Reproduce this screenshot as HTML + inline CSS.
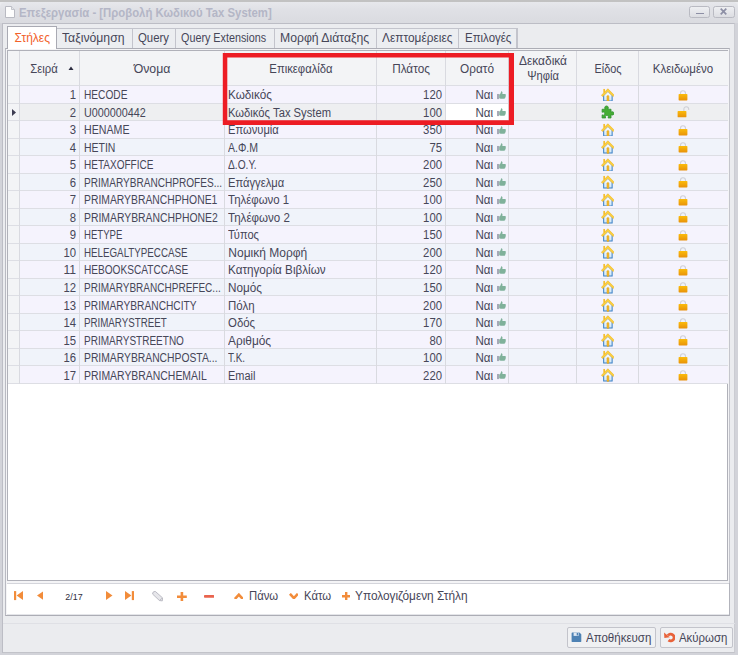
<!DOCTYPE html>
<html lang="el"><head><meta charset="utf-8"><title>Επεξεργασία - [Προβολή Κωδικού Tax System]</title>
<style>
html,body{margin:0;padding:0}
body{width:738px;height:655px;overflow:hidden;position:relative;background:#ebecef;font-family:"Liberation Sans", sans-serif;font-size:11.6px;color:#464658}
.t{position:absolute;display:block;white-space:nowrap;line-height:1}
.t.l{transform-origin:0 50%}
.t.c{transform-origin:50% 50%}
.t.r{transform-origin:100% 50%}
.ic{position:absolute;display:block;line-height:0}
.ic svg{display:block}
</style></head>
<body>
<div class="" style="position:absolute;left:0.00px;top:0.00px;width:738.00px;height:2.00px;background:#c2c2c2"></div>
<div class="" style="position:absolute;left:0.00px;top:2.00px;width:738.00px;height:21.00px;background:linear-gradient(#e7e8ec,#dfe0e5 40%,#dadbe0);border-radius:5px 5px 0 0"></div>
<div class="" style="position:absolute;left:0.00px;top:23.00px;width:738.00px;height:632.00px;background:#d2d3d9"></div>
<div class="" style="position:absolute;left:2.00px;top:23.00px;width:733.00px;height:630.00px;border:1px solid #bcbdc5;border-right-color:#cbccd2;border-bottom-color:#c2c3c9;box-sizing:border-box;background:#ebecef"></div>
<span class="ic" style="left:5.2px;top:5.8px;width:10px;height:12px"><svg viewBox="0 0 10 12" width="10" height="12"><path d="M.5.500h6l3 3v8h-9z" fill="#fdfdfd" stroke="#b9bac2" stroke-width="1"/><path d="M6.500.500v3h3" fill="#e4e5ea" stroke="#b9bac2" stroke-width=".8"/></svg></span>
<span class="t l" id="t0" style="left:18.60px;top:7.00px;font-size:12px;color:#b4b6c6;font-weight:bold;transform:scaleX(0.9454);">Επεξεργασία - [Προβολή Κωδικού Tax System]</span>
<div class="" style="position:absolute;left:689.00px;top:6.00px;width:21.00px;height:12.00px;border:1px solid #b9bac2;box-sizing:border-box;border-radius:2.5px;background:linear-gradient(#eeeff2,#dcdde2)"></div>
<div class="" style="position:absolute;left:696.00px;top:13.00px;width:8.00px;height:1.00px;background:#8d8fa5"></div>
<div class="" style="position:absolute;left:713.00px;top:6.00px;width:22.00px;height:12.00px;border:1px solid #b9bac2;box-sizing:border-box;border-radius:2.5px;background:linear-gradient(#eeeff2,#dcdde2)"></div>
<span class="ic" style="left:720.2px;top:8.4px;width:7px;height:7px"><svg viewBox="0 0 7 7" width="7" height="7"><path d="M.7.700l5.600 5.600M6.300.700L.7 6.300" stroke="#8d8fa5" stroke-width="1.700"/></svg></span>
<div class="" style="position:absolute;left:5.00px;top:48.00px;width:725.00px;height:568.00px;border:1px solid #acadb5;border-left-color:#b9bac2;border-right-color:#c4c5cc;box-sizing:border-box;background:#f4f4f6"></div>
<div class="" style="position:absolute;left:729.00px;top:583.00px;width:1.00px;height:33.00px;background:#b2b3bb"></div>
<div class="" style="position:absolute;left:7.00px;top:26.00px;width:50.00px;height:23.00px;background:#a9aab3"></div>
<div class="" style="position:absolute;left:8.00px;top:27.00px;width:48.00px;height:22.00px;background:#fff"></div>
<span class="t l" id="t1" style="left:14.60px;top:32.00px;font-size:12px;color:#f2612a;">Στήλες</span>
<div class="" style="position:absolute;left:57.00px;top:28.00px;width:76.00px;height:20.00px;background:#c3c4cc"></div>
<div class="" style="position:absolute;left:57.00px;top:29.00px;width:75.00px;height:19.00px;background:#eceef1"></div>
<span class="t l" id="t2" style="left:62.20px;top:32.00px;font-size:12px;transform:scaleX(1.0188);">Ταξινόμηση</span>
<div class="" style="position:absolute;left:133.00px;top:28.00px;width:43.00px;height:20.00px;background:#c3c4cc"></div>
<div class="" style="position:absolute;left:133.00px;top:29.00px;width:42.00px;height:19.00px;background:#eceef1"></div>
<span class="t l" id="t3" style="left:137.60px;top:32.00px;font-size:12px;transform:scaleX(0.9484);">Query</span>
<div class="" style="position:absolute;left:176.00px;top:28.00px;width:99.00px;height:20.00px;background:#c3c4cc"></div>
<div class="" style="position:absolute;left:176.00px;top:29.00px;width:98.00px;height:19.00px;background:#eceef1"></div>
<span class="t l" id="t4" style="left:181.20px;top:32.00px;font-size:12px;transform:scaleX(0.8984);">Query Extensions</span>
<div class="" style="position:absolute;left:275.00px;top:28.00px;width:102.00px;height:20.00px;background:#c3c4cc"></div>
<div class="" style="position:absolute;left:275.00px;top:29.00px;width:101.00px;height:19.00px;background:#eceef1"></div>
<span class="t l" id="t5" style="left:280.20px;top:32.00px;font-size:12px;transform:scaleX(1.0172);">Μορφή Διάταξης</span>
<div class="" style="position:absolute;left:377.00px;top:28.00px;width:82.00px;height:20.00px;background:#c3c4cc"></div>
<div class="" style="position:absolute;left:377.00px;top:29.00px;width:81.00px;height:19.00px;background:#eceef1"></div>
<span class="t l" id="t6" style="left:381.90px;top:32.00px;font-size:12px;transform:scaleX(0.9910);">Λεπτομέρειες</span>
<div class="" style="position:absolute;left:459.00px;top:28.00px;width:59.00px;height:20.00px;background:#c3c4cc"></div>
<div class="" style="position:absolute;left:459.00px;top:29.00px;width:57.00px;height:19.00px;background:#eceef1"></div>
<span class="t l" id="t7" style="left:465.30px;top:32.00px;font-size:12px;transform:scaleX(0.9552);">Επιλογές</span>
<div class="" style="position:absolute;left:7.00px;top:50.00px;width:721.00px;height:531.00px;border:1px solid #b0b1b9;box-sizing:border-box;background:#fff"></div>
<div class="" style="position:absolute;left:8.00px;top:51.00px;width:720.00px;height:35.00px;background:#f3f4f6"></div>
<div class="" style="position:absolute;left:19.00px;top:86.00px;width:709.00px;height:17.00px;background:#f5f3fd"></div>
<div class="" style="position:absolute;left:8.00px;top:86.00px;width:11.00px;height:17.00px;background:#f3f4f6"></div>
<div class="" style="position:absolute;left:19.00px;top:103.00px;width:709.00px;height:18.00px;background:#eeeff1"></div>
<div class="" style="position:absolute;left:8.00px;top:103.00px;width:11.00px;height:18.00px;background:#f3f4f6"></div>
<div class="" style="position:absolute;left:446.00px;top:104.00px;width:62.00px;height:16.00px;background:#fff"></div>
<div class="" style="position:absolute;left:19.00px;top:121.00px;width:709.00px;height:17.00px;background:#f5f3fd"></div>
<div class="" style="position:absolute;left:8.00px;top:121.00px;width:11.00px;height:17.00px;background:#f3f4f6"></div>
<div class="" style="position:absolute;left:19.00px;top:138.00px;width:709.00px;height:18.00px;background:#f0f3fa"></div>
<div class="" style="position:absolute;left:8.00px;top:138.00px;width:11.00px;height:18.00px;background:#f3f4f6"></div>
<div class="" style="position:absolute;left:19.00px;top:156.00px;width:709.00px;height:17.00px;background:#f5f3fd"></div>
<div class="" style="position:absolute;left:8.00px;top:156.00px;width:11.00px;height:17.00px;background:#f3f4f6"></div>
<div class="" style="position:absolute;left:19.00px;top:173.00px;width:709.00px;height:18.00px;background:#f0f3fa"></div>
<div class="" style="position:absolute;left:8.00px;top:173.00px;width:11.00px;height:18.00px;background:#f3f4f6"></div>
<div class="" style="position:absolute;left:19.00px;top:191.00px;width:709.00px;height:17.00px;background:#f5f3fd"></div>
<div class="" style="position:absolute;left:8.00px;top:191.00px;width:11.00px;height:17.00px;background:#f3f4f6"></div>
<div class="" style="position:absolute;left:19.00px;top:208.00px;width:709.00px;height:18.00px;background:#f0f3fa"></div>
<div class="" style="position:absolute;left:8.00px;top:208.00px;width:11.00px;height:18.00px;background:#f3f4f6"></div>
<div class="" style="position:absolute;left:19.00px;top:226.00px;width:709.00px;height:17.00px;background:#f5f3fd"></div>
<div class="" style="position:absolute;left:8.00px;top:226.00px;width:11.00px;height:17.00px;background:#f3f4f6"></div>
<div class="" style="position:absolute;left:19.00px;top:243.00px;width:709.00px;height:18.00px;background:#f0f3fa"></div>
<div class="" style="position:absolute;left:8.00px;top:243.00px;width:11.00px;height:18.00px;background:#f3f4f6"></div>
<div class="" style="position:absolute;left:19.00px;top:261.00px;width:709.00px;height:17.00px;background:#f5f3fd"></div>
<div class="" style="position:absolute;left:8.00px;top:261.00px;width:11.00px;height:17.00px;background:#f3f4f6"></div>
<div class="" style="position:absolute;left:19.00px;top:278.00px;width:709.00px;height:18.00px;background:#f0f3fa"></div>
<div class="" style="position:absolute;left:8.00px;top:278.00px;width:11.00px;height:18.00px;background:#f3f4f6"></div>
<div class="" style="position:absolute;left:19.00px;top:296.00px;width:709.00px;height:17.00px;background:#f5f3fd"></div>
<div class="" style="position:absolute;left:8.00px;top:296.00px;width:11.00px;height:17.00px;background:#f3f4f6"></div>
<div class="" style="position:absolute;left:19.00px;top:313.00px;width:709.00px;height:18.00px;background:#f0f3fa"></div>
<div class="" style="position:absolute;left:8.00px;top:313.00px;width:11.00px;height:18.00px;background:#f3f4f6"></div>
<div class="" style="position:absolute;left:19.00px;top:331.00px;width:709.00px;height:17.00px;background:#f5f3fd"></div>
<div class="" style="position:absolute;left:8.00px;top:331.00px;width:11.00px;height:17.00px;background:#f3f4f6"></div>
<div class="" style="position:absolute;left:19.00px;top:348.00px;width:709.00px;height:18.00px;background:#f0f3fa"></div>
<div class="" style="position:absolute;left:8.00px;top:348.00px;width:11.00px;height:18.00px;background:#f3f4f6"></div>
<div class="" style="position:absolute;left:19.00px;top:366.00px;width:709.00px;height:17.00px;background:#f5f3fd"></div>
<div class="" style="position:absolute;left:8.00px;top:366.00px;width:11.00px;height:17.00px;background:#f3f4f6"></div>
<div class="" style="position:absolute;left:8.00px;top:85.00px;width:720.00px;height:1.00px;background:#dddee4"></div>
<div class="" style="position:absolute;left:8.00px;top:103.00px;width:720.00px;height:1.00px;background:#dddee4"></div>
<div class="" style="position:absolute;left:8.00px;top:120.00px;width:720.00px;height:1.00px;background:#dddee4"></div>
<div class="" style="position:absolute;left:8.00px;top:138.00px;width:720.00px;height:1.00px;background:#dddee4"></div>
<div class="" style="position:absolute;left:8.00px;top:155.00px;width:720.00px;height:1.00px;background:#dddee4"></div>
<div class="" style="position:absolute;left:8.00px;top:173.00px;width:720.00px;height:1.00px;background:#dddee4"></div>
<div class="" style="position:absolute;left:8.00px;top:190.00px;width:720.00px;height:1.00px;background:#dddee4"></div>
<div class="" style="position:absolute;left:8.00px;top:208.00px;width:720.00px;height:1.00px;background:#dddee4"></div>
<div class="" style="position:absolute;left:8.00px;top:225.00px;width:720.00px;height:1.00px;background:#dddee4"></div>
<div class="" style="position:absolute;left:8.00px;top:243.00px;width:720.00px;height:1.00px;background:#dddee4"></div>
<div class="" style="position:absolute;left:8.00px;top:260.00px;width:720.00px;height:1.00px;background:#dddee4"></div>
<div class="" style="position:absolute;left:8.00px;top:278.00px;width:720.00px;height:1.00px;background:#dddee4"></div>
<div class="" style="position:absolute;left:8.00px;top:295.00px;width:720.00px;height:1.00px;background:#dddee4"></div>
<div class="" style="position:absolute;left:8.00px;top:313.00px;width:720.00px;height:1.00px;background:#dddee4"></div>
<div class="" style="position:absolute;left:8.00px;top:330.00px;width:720.00px;height:1.00px;background:#dddee4"></div>
<div class="" style="position:absolute;left:8.00px;top:348.00px;width:720.00px;height:1.00px;background:#dddee4"></div>
<div class="" style="position:absolute;left:8.00px;top:365.00px;width:720.00px;height:1.00px;background:#dddee4"></div>
<div class="" style="position:absolute;left:8.00px;top:383.00px;width:720.00px;height:1.00px;background:#dddee4"></div>
<div class="" style="position:absolute;left:19.00px;top:51.00px;width:1.00px;height:333.00px;background:#d9dae0"></div>
<div class="" style="position:absolute;left:79.00px;top:51.00px;width:1.00px;height:333.00px;background:#d9dae0"></div>
<div class="" style="position:absolute;left:224.00px;top:51.00px;width:1.00px;height:333.00px;background:#d9dae0"></div>
<div class="" style="position:absolute;left:376.00px;top:51.00px;width:1.00px;height:333.00px;background:#d9dae0"></div>
<div class="" style="position:absolute;left:445.00px;top:51.00px;width:1.00px;height:333.00px;background:#d9dae0"></div>
<div class="" style="position:absolute;left:508.00px;top:51.00px;width:1.00px;height:333.00px;background:#d9dae0"></div>
<div class="" style="position:absolute;left:576.00px;top:51.00px;width:1.00px;height:333.00px;background:#d9dae0"></div>
<div class="" style="position:absolute;left:638.00px;top:51.00px;width:1.00px;height:333.00px;background:#d9dae0"></div>
<span class="t c" id="t8" style="left:44.00px;top:63.00px;font-size:12px;transform:translateX(-50%) scaleX(0.9451);">Σειρά</span>
<span class="ic" style="left:68.3px;top:66.4px;width:6px;height:4px"><svg viewBox="0 0 6 4" width="6" height="4"><path d="M.5 4L3 .4 5.500 4z" fill="#2c2c40"/></svg></span>
<span class="t c" id="t9" style="left:151.95px;top:63.00px;font-size:12px;transform:translateX(-50%) scaleX(1.0243);">Όνομα</span>
<span class="t c" id="t10" style="left:300.95px;top:63.00px;font-size:12px;transform:translateX(-50%) scaleX(0.9404);">Επικεφαλίδα</span>
<span class="t c" id="t11" style="left:410.95px;top:63.00px;font-size:12px;transform:translateX(-50%) scaleX(0.9804);">Πλάτος</span>
<span class="t c" id="t12" style="left:476.80px;top:63.00px;font-size:12px;transform:translateX(-50%) scaleX(0.9822);">Ορατό</span>
<span class="t c" id="t13" style="left:542.65px;top:55.00px;font-size:12px;transform:translateX(-50%) scaleX(0.9939);">Δεκαδικά</span>
<span class="t c" id="t14" style="left:542.65px;top:70.00px;font-size:12px;transform:translateX(-50%) scaleX(0.9298);">Ψηφία</span>
<span class="t c" id="t15" style="left:607.80px;top:63.00px;font-size:12px;transform:translateX(-50%) scaleX(0.9057);">Είδος</span>
<span class="t c" id="t16" style="left:683.35px;top:63.00px;font-size:12px;transform:translateX(-50%) scaleX(0.9601);">Κλειδωμένο</span>
<span class="t r" id="t17" style="left:75.80px;top:89.00px;font-size:12px;transform:translateX(-100%) scaleX(0.9421);">1</span>
<span class="t l" id="t18" style="left:83.60px;top:89.00px;font-size:12px;transform:scaleX(0.8453);">HECODE</span>
<span class="t l" id="t19" style="left:228.30px;top:89.00px;font-size:12px;transform:scaleX(0.9757);">Κωδικός</span>
<span class="t r" id="t20" style="left:441.80px;top:89.00px;font-size:12px;transform:translateX(-100%) scaleX(0.9435);">120</span>
<span class="t r" id="t21" style="left:493.10px;top:89.00px;font-size:12px;transform:translateX(-100%) scaleX(0.9627);">Ναι</span>
<span class="ic" style="left:496.90px;top:90.66px;width:9.3px;height:9.0px"><svg viewBox="0 0 10 10" width="9.3" height="9.0"><rect x="0" y="3.300" width="1.900" height="5.700" fill="#9a9cab"/><path d="M2.300 3.900C3.800 3.200 4.200 1.800 4.400.300c1.400 0 1.900 1.200 1.400 3h2.800c.9 0 1.200.8.900 1.400.3.500.2 1-.1 1.400.1.500-.1.900-.4 1.200C9.100 8 8.600 8.600 7.800 8.600H4L2.300 8z" fill="#7fb19a"/></svg></span>
<span class="ic" style="left:600.60px;top:87.61px;width:13.8px;height:13.8px"><svg viewBox="0 0 16 16" width="13.8" height="13.8"><defs><linearGradient id="hg" x1="0" y1="0" x2="0" y2="1"><stop offset="0" stop-color="#ffffff"/><stop offset="1" stop-color="#cfe6f7"/></linearGradient></defs><rect x="2.700" y="1.100" width="1.900" height="4.500" fill="#f4bd2c"/><path d="M3.100 8.400V15.100h9.800V8.400L8 3.700z" fill="url(#hg)" stroke="#3a80c6" stroke-width="1.200"/><path d="M3.100 8.800L8 4l4.900 4.800V7L8 2.600 3.100 7z" fill="#fff"/><rect x="6.900" y="8.800" width="2.300" height="6.900" rx=".9" fill="#f3b928" stroke="#e29a10" stroke-width=".5"/><path d="M.5 8.400L8 .9l7.500 7.500-1.500 1.500L8 3.900 2 9.900z" fill="#fbd13e" stroke="#eeb11a" stroke-width=".7" stroke-linejoin="round"/></svg></span>
<span class="ic" style="left:677.90px;top:89.81px;width:10px;height:11px"><svg viewBox="0 0 10 11" width="10" height="11"><defs><linearGradient id="lg" x1="0" y1="0" x2="0" y2="1"><stop offset="0" stop-color="#fbbb0a"/><stop offset="1" stop-color="#e8920a"/></linearGradient></defs><path d="M2.500 4.600V3.300a2.500 2.500 0 0 1 5 0V4.600" fill="none" stroke="#cfd0d6" stroke-width="1.100"/><rect x=".6" y="4.100" width="8.800" height="6.400" rx=".7" fill="url(#lg)"/></svg></span>
<span class="t r" id="t22" style="left:75.80px;top:107.00px;font-size:12px;transform:translateX(-100%) scaleX(0.9421);">2</span>
<span class="t l" id="t23" style="left:83.60px;top:107.00px;font-size:12px;transform:scaleX(0.8991);">U000000442</span>
<span class="t l" id="t24" style="left:228.30px;top:107.00px;font-size:12px;transform:scaleX(0.9344);">Κωδικός Tax System</span>
<span class="t r" id="t25" style="left:441.80px;top:107.00px;font-size:12px;transform:translateX(-100%) scaleX(0.9435);">100</span>
<span class="t r" id="t26" style="left:493.10px;top:107.00px;font-size:12px;transform:translateX(-100%) scaleX(0.9627);">Ναι</span>
<span class="ic" style="left:496.90px;top:108.17px;width:9.3px;height:9.0px"><svg viewBox="0 0 10 10" width="9.3" height="9.0"><rect x="0" y="3.300" width="1.900" height="5.700" fill="#9a9cab"/><path d="M2.300 3.900C3.800 3.200 4.200 1.800 4.400.300c1.400 0 1.900 1.200 1.400 3h2.800c.9 0 1.200.8.900 1.400.3.500.2 1-.1 1.400.1.500-.1.900-.4 1.200C9.100 8 8.600 8.600 7.800 8.600H4L2.300 8z" fill="#7fb19a"/></svg></span>
<span class="ic" style="left:600.50px;top:105.32px;width:13.6px;height:13.6px"><svg viewBox="0 0 16 16" width="13.6" height="13.6"><path d="M1.300 5h3.500c-1-1.900-.2-3.900 1.700-3.900s2.700 2 1.700 3.900h3.600v3.400c1.700-1 3.500-.2 3.500 1.500s-1.800 2.500-3.500 1.500v3.900H8.300c.9-1.700.2-3.100-1.400-3.100s-2.300 1.400-1.400 3.100H1.300v-3.700c1.600.9 3.100.2 3.100-1.400S2.900 7.700 1.300 8.600z" fill="#46ad35" stroke="#2f9130" stroke-width=".9" stroke-linejoin="round"/></svg></span>
<span class="ic" style="left:676.60px;top:106.22px;width:13px;height:12px"><svg viewBox="0 0 13 12" width="13" height="12"><defs><linearGradient id="lg2" x1="0" y1="0" x2="0" y2="1"><stop offset="0" stop-color="#fbbb0a"/><stop offset="1" stop-color="#e8920a"/></linearGradient></defs><path d="M6.900 5.200V3.100a2.400 2.400 0 0 1 4.800 0V3.900" fill="none" stroke="#cfd0d6" stroke-width="1.100"/><rect x=".6" y="4.950" width="8.800" height="6.400" rx=".7" fill="url(#lg2)"/></svg></span>
<span class="t r" id="t27" style="left:75.80px;top:124.00px;font-size:12px;transform:translateX(-100%) scaleX(0.9421);">3</span>
<span class="t l" id="t28" style="left:83.60px;top:124.00px;font-size:12px;transform:scaleX(0.8862);">HENAME</span>
<span class="t l" id="t29" style="left:228.30px;top:124.00px;font-size:12px;transform:scaleX(0.9310);">Επωνυμία</span>
<span class="t r" id="t30" style="left:441.80px;top:124.00px;font-size:12px;transform:translateX(-100%) scaleX(0.9435);">350</span>
<span class="t r" id="t31" style="left:493.10px;top:124.00px;font-size:12px;transform:translateX(-100%) scaleX(0.9627);">Ναι</span>
<span class="ic" style="left:496.90px;top:125.69px;width:9.3px;height:9.0px"><svg viewBox="0 0 10 10" width="9.3" height="9.0"><rect x="0" y="3.300" width="1.900" height="5.700" fill="#9a9cab"/><path d="M2.300 3.900C3.800 3.200 4.200 1.800 4.400.300c1.400 0 1.900 1.200 1.400 3h2.800c.9 0 1.200.8.900 1.400.3.500.2 1-.1 1.400.1.500-.1.900-.4 1.200C9.100 8 8.600 8.600 7.800 8.600H4L2.300 8z" fill="#7fb19a"/></svg></span>
<span class="ic" style="left:600.60px;top:122.64px;width:13.8px;height:13.8px"><svg viewBox="0 0 16 16" width="13.8" height="13.8"><defs><linearGradient id="hg" x1="0" y1="0" x2="0" y2="1"><stop offset="0" stop-color="#ffffff"/><stop offset="1" stop-color="#cfe6f7"/></linearGradient></defs><rect x="2.700" y="1.100" width="1.900" height="4.500" fill="#f4bd2c"/><path d="M3.100 8.400V15.100h9.800V8.400L8 3.700z" fill="url(#hg)" stroke="#3a80c6" stroke-width="1.200"/><path d="M3.100 8.800L8 4l4.900 4.800V7L8 2.600 3.100 7z" fill="#fff"/><rect x="6.900" y="8.800" width="2.300" height="6.900" rx=".9" fill="#f3b928" stroke="#e29a10" stroke-width=".5"/><path d="M.5 8.400L8 .9l7.500 7.500-1.500 1.500L8 3.900 2 9.900z" fill="#fbd13e" stroke="#eeb11a" stroke-width=".7" stroke-linejoin="round"/></svg></span>
<span class="ic" style="left:677.90px;top:124.84px;width:10px;height:11px"><svg viewBox="0 0 10 11" width="10" height="11"><defs><linearGradient id="lg" x1="0" y1="0" x2="0" y2="1"><stop offset="0" stop-color="#fbbb0a"/><stop offset="1" stop-color="#e8920a"/></linearGradient></defs><path d="M2.500 4.600V3.300a2.500 2.500 0 0 1 5 0V4.600" fill="none" stroke="#cfd0d6" stroke-width="1.100"/><rect x=".6" y="4.100" width="8.800" height="6.400" rx=".7" fill="url(#lg)"/></svg></span>
<span class="t r" id="t32" style="left:75.80px;top:142.00px;font-size:12px;transform:translateX(-100%) scaleX(0.9421);">4</span>
<span class="t l" id="t33" style="left:83.60px;top:142.00px;font-size:12px;transform:scaleX(0.8722);">HETIN</span>
<span class="t l" id="t34" style="left:228.30px;top:142.00px;font-size:12px;transform:scaleX(0.8759);">Α.Φ.Μ</span>
<span class="t r" id="t35" style="left:441.80px;top:142.00px;font-size:12px;transform:translateX(-100%) scaleX(0.9432);">75</span>
<span class="t r" id="t36" style="left:493.10px;top:142.00px;font-size:12px;transform:translateX(-100%) scaleX(0.9627);">Ναι</span>
<span class="ic" style="left:496.90px;top:143.20px;width:9.3px;height:9.0px"><svg viewBox="0 0 10 10" width="9.3" height="9.0"><rect x="0" y="3.300" width="1.900" height="5.700" fill="#9a9cab"/><path d="M2.300 3.900C3.800 3.200 4.200 1.800 4.400.300c1.400 0 1.900 1.200 1.400 3h2.800c.9 0 1.200.8.900 1.400.3.500.2 1-.1 1.400.1.500-.1.900-.4 1.200C9.100 8 8.600 8.600 7.800 8.600H4L2.300 8z" fill="#7fb19a"/></svg></span>
<span class="ic" style="left:600.60px;top:140.15px;width:13.8px;height:13.8px"><svg viewBox="0 0 16 16" width="13.8" height="13.8"><defs><linearGradient id="hg" x1="0" y1="0" x2="0" y2="1"><stop offset="0" stop-color="#ffffff"/><stop offset="1" stop-color="#cfe6f7"/></linearGradient></defs><rect x="2.700" y="1.100" width="1.900" height="4.500" fill="#f4bd2c"/><path d="M3.100 8.400V15.100h9.800V8.400L8 3.700z" fill="url(#hg)" stroke="#3a80c6" stroke-width="1.200"/><path d="M3.100 8.800L8 4l4.900 4.800V7L8 2.600 3.100 7z" fill="#fff"/><rect x="6.900" y="8.800" width="2.300" height="6.900" rx=".9" fill="#f3b928" stroke="#e29a10" stroke-width=".5"/><path d="M.5 8.400L8 .9l7.500 7.500-1.500 1.500L8 3.900 2 9.900z" fill="#fbd13e" stroke="#eeb11a" stroke-width=".7" stroke-linejoin="round"/></svg></span>
<span class="ic" style="left:677.90px;top:142.35px;width:10px;height:11px"><svg viewBox="0 0 10 11" width="10" height="11"><defs><linearGradient id="lg" x1="0" y1="0" x2="0" y2="1"><stop offset="0" stop-color="#fbbb0a"/><stop offset="1" stop-color="#e8920a"/></linearGradient></defs><path d="M2.500 4.600V3.300a2.500 2.500 0 0 1 5 0V4.600" fill="none" stroke="#cfd0d6" stroke-width="1.100"/><rect x=".6" y="4.100" width="8.800" height="6.400" rx=".7" fill="url(#lg)"/></svg></span>
<span class="t r" id="t37" style="left:75.80px;top:159.00px;font-size:12px;transform:translateX(-100%) scaleX(0.9421);">5</span>
<span class="t l" id="t38" style="left:83.60px;top:159.00px;font-size:12px;transform:scaleX(0.8349);">HETAXOFFICE</span>
<span class="t l" id="t39" style="left:228.30px;top:159.00px;font-size:12px;transform:scaleX(0.8484);">Δ.Ο.Υ.</span>
<span class="t r" id="t40" style="left:441.80px;top:159.00px;font-size:12px;transform:translateX(-100%) scaleX(0.9435);">200</span>
<span class="t r" id="t41" style="left:493.10px;top:159.00px;font-size:12px;transform:translateX(-100%) scaleX(0.9627);">Ναι</span>
<span class="ic" style="left:496.90px;top:160.72px;width:9.3px;height:9.0px"><svg viewBox="0 0 10 10" width="9.3" height="9.0"><rect x="0" y="3.300" width="1.900" height="5.700" fill="#9a9cab"/><path d="M2.300 3.900C3.800 3.200 4.200 1.800 4.400.300c1.400 0 1.900 1.200 1.400 3h2.800c.9 0 1.200.8.900 1.400.3.500.2 1-.1 1.400.1.500-.1.900-.4 1.200C9.100 8 8.600 8.600 7.800 8.600H4L2.300 8z" fill="#7fb19a"/></svg></span>
<span class="ic" style="left:600.60px;top:157.67px;width:13.8px;height:13.8px"><svg viewBox="0 0 16 16" width="13.8" height="13.8"><defs><linearGradient id="hg" x1="0" y1="0" x2="0" y2="1"><stop offset="0" stop-color="#ffffff"/><stop offset="1" stop-color="#cfe6f7"/></linearGradient></defs><rect x="2.700" y="1.100" width="1.900" height="4.500" fill="#f4bd2c"/><path d="M3.100 8.400V15.100h9.800V8.400L8 3.700z" fill="url(#hg)" stroke="#3a80c6" stroke-width="1.200"/><path d="M3.100 8.800L8 4l4.900 4.800V7L8 2.600 3.100 7z" fill="#fff"/><rect x="6.900" y="8.800" width="2.300" height="6.900" rx=".9" fill="#f3b928" stroke="#e29a10" stroke-width=".5"/><path d="M.5 8.400L8 .9l7.500 7.500-1.500 1.500L8 3.900 2 9.900z" fill="#fbd13e" stroke="#eeb11a" stroke-width=".7" stroke-linejoin="round"/></svg></span>
<span class="ic" style="left:677.90px;top:159.87px;width:10px;height:11px"><svg viewBox="0 0 10 11" width="10" height="11"><defs><linearGradient id="lg" x1="0" y1="0" x2="0" y2="1"><stop offset="0" stop-color="#fbbb0a"/><stop offset="1" stop-color="#e8920a"/></linearGradient></defs><path d="M2.500 4.600V3.300a2.500 2.500 0 0 1 5 0V4.600" fill="none" stroke="#cfd0d6" stroke-width="1.100"/><rect x=".6" y="4.100" width="8.800" height="6.400" rx=".7" fill="url(#lg)"/></svg></span>
<span class="t r" id="t42" style="left:75.80px;top:177.00px;font-size:12px;transform:translateX(-100%) scaleX(0.9421);">6</span>
<span class="t l" id="t43" style="left:83.60px;top:177.00px;font-size:12px;transform:scaleX(0.8396);">PRIMARYBRANCHPROFES...</span>
<span class="t l" id="t44" style="left:228.30px;top:177.00px;font-size:12px;transform:scaleX(0.9325);">Επάγγελμα</span>
<span class="t r" id="t45" style="left:441.80px;top:177.00px;font-size:12px;transform:translateX(-100%) scaleX(0.9435);">250</span>
<span class="t r" id="t46" style="left:493.10px;top:177.00px;font-size:12px;transform:translateX(-100%) scaleX(0.9627);">Ναι</span>
<span class="ic" style="left:496.90px;top:178.23px;width:9.3px;height:9.0px"><svg viewBox="0 0 10 10" width="9.3" height="9.0"><rect x="0" y="3.300" width="1.900" height="5.700" fill="#9a9cab"/><path d="M2.300 3.900C3.800 3.200 4.200 1.800 4.400.300c1.400 0 1.900 1.200 1.400 3h2.800c.9 0 1.200.8.900 1.400.3.500.2 1-.1 1.400.1.500-.1.900-.4 1.200C9.100 8 8.600 8.600 7.800 8.600H4L2.300 8z" fill="#7fb19a"/></svg></span>
<span class="ic" style="left:600.60px;top:175.18px;width:13.8px;height:13.8px"><svg viewBox="0 0 16 16" width="13.8" height="13.8"><defs><linearGradient id="hg" x1="0" y1="0" x2="0" y2="1"><stop offset="0" stop-color="#ffffff"/><stop offset="1" stop-color="#cfe6f7"/></linearGradient></defs><rect x="2.700" y="1.100" width="1.900" height="4.500" fill="#f4bd2c"/><path d="M3.100 8.400V15.100h9.800V8.400L8 3.700z" fill="url(#hg)" stroke="#3a80c6" stroke-width="1.200"/><path d="M3.100 8.800L8 4l4.900 4.800V7L8 2.600 3.100 7z" fill="#fff"/><rect x="6.900" y="8.800" width="2.300" height="6.900" rx=".9" fill="#f3b928" stroke="#e29a10" stroke-width=".5"/><path d="M.5 8.400L8 .9l7.500 7.500-1.500 1.500L8 3.900 2 9.900z" fill="#fbd13e" stroke="#eeb11a" stroke-width=".7" stroke-linejoin="round"/></svg></span>
<span class="ic" style="left:677.90px;top:177.38px;width:10px;height:11px"><svg viewBox="0 0 10 11" width="10" height="11"><defs><linearGradient id="lg" x1="0" y1="0" x2="0" y2="1"><stop offset="0" stop-color="#fbbb0a"/><stop offset="1" stop-color="#e8920a"/></linearGradient></defs><path d="M2.500 4.600V3.300a2.500 2.500 0 0 1 5 0V4.600" fill="none" stroke="#cfd0d6" stroke-width="1.100"/><rect x=".6" y="4.100" width="8.800" height="6.400" rx=".7" fill="url(#lg)"/></svg></span>
<span class="t r" id="t47" style="left:75.80px;top:194.00px;font-size:12px;transform:translateX(-100%) scaleX(0.9421);">7</span>
<span class="t l" id="t48" style="left:83.60px;top:194.00px;font-size:12px;transform:scaleX(0.8629);">PRIMARYBRANCHPHONE1</span>
<span class="t l" id="t49" style="left:228.30px;top:194.00px;font-size:12px;transform:scaleX(0.9516);">Τηλέφωνο 1</span>
<span class="t r" id="t50" style="left:441.80px;top:194.00px;font-size:12px;transform:translateX(-100%) scaleX(0.9435);">100</span>
<span class="t r" id="t51" style="left:493.10px;top:194.00px;font-size:12px;transform:translateX(-100%) scaleX(0.9627);">Ναι</span>
<span class="ic" style="left:496.90px;top:195.75px;width:9.3px;height:9.0px"><svg viewBox="0 0 10 10" width="9.3" height="9.0"><rect x="0" y="3.300" width="1.900" height="5.700" fill="#9a9cab"/><path d="M2.300 3.900C3.800 3.200 4.200 1.800 4.400.300c1.400 0 1.900 1.200 1.400 3h2.800c.9 0 1.200.8.900 1.400.3.500.2 1-.1 1.400.1.500-.1.900-.4 1.200C9.100 8 8.600 8.600 7.800 8.600H4L2.300 8z" fill="#7fb19a"/></svg></span>
<span class="ic" style="left:600.60px;top:192.70px;width:13.8px;height:13.8px"><svg viewBox="0 0 16 16" width="13.8" height="13.8"><defs><linearGradient id="hg" x1="0" y1="0" x2="0" y2="1"><stop offset="0" stop-color="#ffffff"/><stop offset="1" stop-color="#cfe6f7"/></linearGradient></defs><rect x="2.700" y="1.100" width="1.900" height="4.500" fill="#f4bd2c"/><path d="M3.100 8.400V15.100h9.800V8.400L8 3.700z" fill="url(#hg)" stroke="#3a80c6" stroke-width="1.200"/><path d="M3.100 8.800L8 4l4.900 4.800V7L8 2.600 3.100 7z" fill="#fff"/><rect x="6.900" y="8.800" width="2.300" height="6.900" rx=".9" fill="#f3b928" stroke="#e29a10" stroke-width=".5"/><path d="M.5 8.400L8 .9l7.500 7.500-1.500 1.500L8 3.900 2 9.900z" fill="#fbd13e" stroke="#eeb11a" stroke-width=".7" stroke-linejoin="round"/></svg></span>
<span class="ic" style="left:677.90px;top:194.90px;width:10px;height:11px"><svg viewBox="0 0 10 11" width="10" height="11"><defs><linearGradient id="lg" x1="0" y1="0" x2="0" y2="1"><stop offset="0" stop-color="#fbbb0a"/><stop offset="1" stop-color="#e8920a"/></linearGradient></defs><path d="M2.500 4.600V3.300a2.500 2.500 0 0 1 5 0V4.600" fill="none" stroke="#cfd0d6" stroke-width="1.100"/><rect x=".6" y="4.100" width="8.800" height="6.400" rx=".7" fill="url(#lg)"/></svg></span>
<span class="t r" id="t52" style="left:75.80px;top:212.00px;font-size:12px;transform:translateX(-100%) scaleX(0.9421);">8</span>
<span class="t l" id="t53" style="left:83.60px;top:212.00px;font-size:12px;transform:scaleX(0.8655);">PRIMARYBRANCHPHONE2</span>
<span class="t l" id="t54" style="left:228.30px;top:212.00px;font-size:12px;transform:scaleX(0.9609);">Τηλέφωνο 2</span>
<span class="t r" id="t55" style="left:441.80px;top:212.00px;font-size:12px;transform:translateX(-100%) scaleX(0.9435);">100</span>
<span class="t r" id="t56" style="left:493.10px;top:212.00px;font-size:12px;transform:translateX(-100%) scaleX(0.9627);">Ναι</span>
<span class="ic" style="left:496.90px;top:213.26px;width:9.3px;height:9.0px"><svg viewBox="0 0 10 10" width="9.3" height="9.0"><rect x="0" y="3.300" width="1.900" height="5.700" fill="#9a9cab"/><path d="M2.300 3.900C3.800 3.200 4.200 1.800 4.400.300c1.400 0 1.900 1.200 1.400 3h2.800c.9 0 1.200.8.900 1.400.3.500.2 1-.1 1.400.1.500-.1.900-.4 1.200C9.100 8 8.600 8.600 7.800 8.600H4L2.300 8z" fill="#7fb19a"/></svg></span>
<span class="ic" style="left:600.60px;top:210.21px;width:13.8px;height:13.8px"><svg viewBox="0 0 16 16" width="13.8" height="13.8"><defs><linearGradient id="hg" x1="0" y1="0" x2="0" y2="1"><stop offset="0" stop-color="#ffffff"/><stop offset="1" stop-color="#cfe6f7"/></linearGradient></defs><rect x="2.700" y="1.100" width="1.900" height="4.500" fill="#f4bd2c"/><path d="M3.100 8.400V15.100h9.800V8.400L8 3.700z" fill="url(#hg)" stroke="#3a80c6" stroke-width="1.200"/><path d="M3.100 8.800L8 4l4.900 4.800V7L8 2.600 3.100 7z" fill="#fff"/><rect x="6.900" y="8.800" width="2.300" height="6.900" rx=".9" fill="#f3b928" stroke="#e29a10" stroke-width=".5"/><path d="M.5 8.400L8 .9l7.500 7.500-1.500 1.500L8 3.900 2 9.900z" fill="#fbd13e" stroke="#eeb11a" stroke-width=".7" stroke-linejoin="round"/></svg></span>
<span class="ic" style="left:677.90px;top:212.41px;width:10px;height:11px"><svg viewBox="0 0 10 11" width="10" height="11"><defs><linearGradient id="lg" x1="0" y1="0" x2="0" y2="1"><stop offset="0" stop-color="#fbbb0a"/><stop offset="1" stop-color="#e8920a"/></linearGradient></defs><path d="M2.500 4.600V3.300a2.500 2.500 0 0 1 5 0V4.600" fill="none" stroke="#cfd0d6" stroke-width="1.100"/><rect x=".6" y="4.100" width="8.800" height="6.400" rx=".7" fill="url(#lg)"/></svg></span>
<span class="t r" id="t57" style="left:75.80px;top:229.00px;font-size:12px;transform:translateX(-100%) scaleX(0.9421);">9</span>
<span class="t l" id="t58" style="left:83.60px;top:229.00px;font-size:12px;transform:scaleX(0.7977);">HETYPE</span>
<span class="t l" id="t59" style="left:228.30px;top:229.00px;font-size:12px;transform:scaleX(0.9245);">Τύπος</span>
<span class="t r" id="t60" style="left:441.80px;top:229.00px;font-size:12px;transform:translateX(-100%) scaleX(0.9435);">150</span>
<span class="t r" id="t61" style="left:493.10px;top:229.00px;font-size:12px;transform:translateX(-100%) scaleX(0.9627);">Ναι</span>
<span class="ic" style="left:496.90px;top:230.78px;width:9.3px;height:9.0px"><svg viewBox="0 0 10 10" width="9.3" height="9.0"><rect x="0" y="3.300" width="1.900" height="5.700" fill="#9a9cab"/><path d="M2.300 3.900C3.800 3.200 4.200 1.800 4.400.300c1.400 0 1.900 1.200 1.400 3h2.800c.9 0 1.200.8.900 1.400.3.500.2 1-.1 1.400.1.500-.1.900-.4 1.200C9.100 8 8.600 8.600 7.800 8.600H4L2.300 8z" fill="#7fb19a"/></svg></span>
<span class="ic" style="left:600.60px;top:227.73px;width:13.8px;height:13.8px"><svg viewBox="0 0 16 16" width="13.8" height="13.8"><defs><linearGradient id="hg" x1="0" y1="0" x2="0" y2="1"><stop offset="0" stop-color="#ffffff"/><stop offset="1" stop-color="#cfe6f7"/></linearGradient></defs><rect x="2.700" y="1.100" width="1.900" height="4.500" fill="#f4bd2c"/><path d="M3.100 8.400V15.100h9.800V8.400L8 3.700z" fill="url(#hg)" stroke="#3a80c6" stroke-width="1.200"/><path d="M3.100 8.800L8 4l4.900 4.800V7L8 2.600 3.100 7z" fill="#fff"/><rect x="6.900" y="8.800" width="2.300" height="6.900" rx=".9" fill="#f3b928" stroke="#e29a10" stroke-width=".5"/><path d="M.5 8.400L8 .9l7.500 7.500-1.500 1.500L8 3.900 2 9.900z" fill="#fbd13e" stroke="#eeb11a" stroke-width=".7" stroke-linejoin="round"/></svg></span>
<span class="ic" style="left:677.90px;top:229.93px;width:10px;height:11px"><svg viewBox="0 0 10 11" width="10" height="11"><defs><linearGradient id="lg" x1="0" y1="0" x2="0" y2="1"><stop offset="0" stop-color="#fbbb0a"/><stop offset="1" stop-color="#e8920a"/></linearGradient></defs><path d="M2.500 4.600V3.300a2.500 2.500 0 0 1 5 0V4.600" fill="none" stroke="#cfd0d6" stroke-width="1.100"/><rect x=".6" y="4.100" width="8.800" height="6.400" rx=".7" fill="url(#lg)"/></svg></span>
<span class="t r" id="t62" style="left:75.80px;top:247.00px;font-size:12px;transform:translateX(-100%) scaleX(0.9432);">10</span>
<span class="t l" id="t63" style="left:83.60px;top:247.00px;font-size:12px;transform:scaleX(0.8140);">HELEGALTYPECCASE</span>
<span class="t l" id="t64" style="left:228.30px;top:247.00px;font-size:12px;">Νομική Μορφή</span>
<span class="t r" id="t65" style="left:441.80px;top:247.00px;font-size:12px;transform:translateX(-100%) scaleX(0.9435);">200</span>
<span class="t r" id="t66" style="left:493.10px;top:247.00px;font-size:12px;transform:translateX(-100%) scaleX(0.9627);">Ναι</span>
<span class="ic" style="left:496.90px;top:248.29px;width:9.3px;height:9.0px"><svg viewBox="0 0 10 10" width="9.3" height="9.0"><rect x="0" y="3.300" width="1.900" height="5.700" fill="#9a9cab"/><path d="M2.300 3.900C3.800 3.200 4.200 1.800 4.400.300c1.400 0 1.900 1.200 1.400 3h2.800c.9 0 1.200.8.900 1.400.3.500.2 1-.1 1.400.1.500-.1.900-.4 1.200C9.100 8 8.600 8.600 7.800 8.600H4L2.300 8z" fill="#7fb19a"/></svg></span>
<span class="ic" style="left:600.60px;top:245.24px;width:13.8px;height:13.8px"><svg viewBox="0 0 16 16" width="13.8" height="13.8"><defs><linearGradient id="hg" x1="0" y1="0" x2="0" y2="1"><stop offset="0" stop-color="#ffffff"/><stop offset="1" stop-color="#cfe6f7"/></linearGradient></defs><rect x="2.700" y="1.100" width="1.900" height="4.500" fill="#f4bd2c"/><path d="M3.100 8.400V15.100h9.800V8.400L8 3.700z" fill="url(#hg)" stroke="#3a80c6" stroke-width="1.200"/><path d="M3.100 8.800L8 4l4.900 4.800V7L8 2.600 3.100 7z" fill="#fff"/><rect x="6.900" y="8.800" width="2.300" height="6.900" rx=".9" fill="#f3b928" stroke="#e29a10" stroke-width=".5"/><path d="M.5 8.400L8 .9l7.500 7.500-1.500 1.500L8 3.900 2 9.900z" fill="#fbd13e" stroke="#eeb11a" stroke-width=".7" stroke-linejoin="round"/></svg></span>
<span class="ic" style="left:677.90px;top:247.44px;width:10px;height:11px"><svg viewBox="0 0 10 11" width="10" height="11"><defs><linearGradient id="lg" x1="0" y1="0" x2="0" y2="1"><stop offset="0" stop-color="#fbbb0a"/><stop offset="1" stop-color="#e8920a"/></linearGradient></defs><path d="M2.500 4.600V3.300a2.500 2.500 0 0 1 5 0V4.600" fill="none" stroke="#cfd0d6" stroke-width="1.100"/><rect x=".6" y="4.100" width="8.800" height="6.400" rx=".7" fill="url(#lg)"/></svg></span>
<span class="t r" id="t67" style="left:75.80px;top:264.00px;font-size:12px;transform:translateX(-100%) scaleX(1.0105);">11</span>
<span class="t l" id="t68" style="left:83.60px;top:264.00px;font-size:12px;transform:scaleX(0.8416);">HEBOOKSCATCCASE</span>
<span class="t l" id="t69" style="left:228.30px;top:264.00px;font-size:12px;transform:scaleX(0.9734);">Κατηγορία Βιβλίων</span>
<span class="t r" id="t70" style="left:441.80px;top:264.00px;font-size:12px;transform:translateX(-100%) scaleX(0.9435);">120</span>
<span class="t r" id="t71" style="left:493.10px;top:264.00px;font-size:12px;transform:translateX(-100%) scaleX(0.9627);">Ναι</span>
<span class="ic" style="left:496.90px;top:265.81px;width:9.3px;height:9.0px"><svg viewBox="0 0 10 10" width="9.3" height="9.0"><rect x="0" y="3.300" width="1.900" height="5.700" fill="#9a9cab"/><path d="M2.300 3.900C3.800 3.200 4.200 1.800 4.400.300c1.400 0 1.900 1.200 1.400 3h2.800c.9 0 1.200.8.900 1.400.3.500.2 1-.1 1.400.1.500-.1.900-.4 1.200C9.100 8 8.600 8.600 7.800 8.600H4L2.300 8z" fill="#7fb19a"/></svg></span>
<span class="ic" style="left:600.60px;top:262.76px;width:13.8px;height:13.8px"><svg viewBox="0 0 16 16" width="13.8" height="13.8"><defs><linearGradient id="hg" x1="0" y1="0" x2="0" y2="1"><stop offset="0" stop-color="#ffffff"/><stop offset="1" stop-color="#cfe6f7"/></linearGradient></defs><rect x="2.700" y="1.100" width="1.900" height="4.500" fill="#f4bd2c"/><path d="M3.100 8.400V15.100h9.800V8.400L8 3.700z" fill="url(#hg)" stroke="#3a80c6" stroke-width="1.200"/><path d="M3.100 8.800L8 4l4.900 4.800V7L8 2.600 3.100 7z" fill="#fff"/><rect x="6.900" y="8.800" width="2.300" height="6.900" rx=".9" fill="#f3b928" stroke="#e29a10" stroke-width=".5"/><path d="M.5 8.400L8 .9l7.500 7.500-1.500 1.500L8 3.900 2 9.900z" fill="#fbd13e" stroke="#eeb11a" stroke-width=".7" stroke-linejoin="round"/></svg></span>
<span class="ic" style="left:677.90px;top:264.96px;width:10px;height:11px"><svg viewBox="0 0 10 11" width="10" height="11"><defs><linearGradient id="lg" x1="0" y1="0" x2="0" y2="1"><stop offset="0" stop-color="#fbbb0a"/><stop offset="1" stop-color="#e8920a"/></linearGradient></defs><path d="M2.500 4.600V3.300a2.500 2.500 0 0 1 5 0V4.600" fill="none" stroke="#cfd0d6" stroke-width="1.100"/><rect x=".6" y="4.100" width="8.800" height="6.400" rx=".7" fill="url(#lg)"/></svg></span>
<span class="t r" id="t72" style="left:75.80px;top:282.00px;font-size:12px;transform:translateX(-100%) scaleX(0.9432);">12</span>
<span class="t l" id="t73" style="left:83.60px;top:282.00px;font-size:12px;transform:scaleX(0.8345);">PRIMARYBRANCHPREFEC...</span>
<span class="t l" id="t74" style="left:228.30px;top:282.00px;font-size:12px;transform:scaleX(0.9764);">Νομός</span>
<span class="t r" id="t75" style="left:441.80px;top:282.00px;font-size:12px;transform:translateX(-100%) scaleX(0.9435);">150</span>
<span class="t r" id="t76" style="left:493.10px;top:282.00px;font-size:12px;transform:translateX(-100%) scaleX(0.9627);">Ναι</span>
<span class="ic" style="left:496.90px;top:283.32px;width:9.3px;height:9.0px"><svg viewBox="0 0 10 10" width="9.3" height="9.0"><rect x="0" y="3.300" width="1.900" height="5.700" fill="#9a9cab"/><path d="M2.300 3.900C3.800 3.200 4.200 1.800 4.400.300c1.400 0 1.900 1.200 1.400 3h2.800c.9 0 1.200.8.900 1.400.3.500.2 1-.1 1.400.1.500-.1.900-.4 1.200C9.100 8 8.600 8.600 7.800 8.600H4L2.300 8z" fill="#7fb19a"/></svg></span>
<span class="ic" style="left:600.60px;top:280.27px;width:13.8px;height:13.8px"><svg viewBox="0 0 16 16" width="13.8" height="13.8"><defs><linearGradient id="hg" x1="0" y1="0" x2="0" y2="1"><stop offset="0" stop-color="#ffffff"/><stop offset="1" stop-color="#cfe6f7"/></linearGradient></defs><rect x="2.700" y="1.100" width="1.900" height="4.500" fill="#f4bd2c"/><path d="M3.100 8.400V15.100h9.800V8.400L8 3.700z" fill="url(#hg)" stroke="#3a80c6" stroke-width="1.200"/><path d="M3.100 8.800L8 4l4.900 4.800V7L8 2.600 3.100 7z" fill="#fff"/><rect x="6.900" y="8.800" width="2.300" height="6.900" rx=".9" fill="#f3b928" stroke="#e29a10" stroke-width=".5"/><path d="M.5 8.400L8 .9l7.500 7.500-1.500 1.500L8 3.900 2 9.900z" fill="#fbd13e" stroke="#eeb11a" stroke-width=".7" stroke-linejoin="round"/></svg></span>
<span class="ic" style="left:677.90px;top:282.47px;width:10px;height:11px"><svg viewBox="0 0 10 11" width="10" height="11"><defs><linearGradient id="lg" x1="0" y1="0" x2="0" y2="1"><stop offset="0" stop-color="#fbbb0a"/><stop offset="1" stop-color="#e8920a"/></linearGradient></defs><path d="M2.500 4.600V3.300a2.500 2.500 0 0 1 5 0V4.600" fill="none" stroke="#cfd0d6" stroke-width="1.100"/><rect x=".6" y="4.100" width="8.800" height="6.400" rx=".7" fill="url(#lg)"/></svg></span>
<span class="t r" id="t77" style="left:75.80px;top:300.00px;font-size:12px;transform:translateX(-100%) scaleX(0.9432);">13</span>
<span class="t l" id="t78" style="left:83.60px;top:300.00px;font-size:12px;transform:scaleX(0.8500);">PRIMARYBRANCHCITY</span>
<span class="t l" id="t79" style="left:228.30px;top:300.00px;font-size:12px;transform:scaleX(0.9569);">Πόλη</span>
<span class="t r" id="t80" style="left:441.80px;top:300.00px;font-size:12px;transform:translateX(-100%) scaleX(0.9435);">200</span>
<span class="t r" id="t81" style="left:493.10px;top:300.00px;font-size:12px;transform:translateX(-100%) scaleX(0.9627);">Ναι</span>
<span class="ic" style="left:496.90px;top:300.84px;width:9.3px;height:9.0px"><svg viewBox="0 0 10 10" width="9.3" height="9.0"><rect x="0" y="3.300" width="1.900" height="5.700" fill="#9a9cab"/><path d="M2.300 3.900C3.800 3.200 4.200 1.800 4.400.300c1.400 0 1.900 1.200 1.400 3h2.800c.9 0 1.200.8.900 1.400.3.500.2 1-.1 1.400.1.500-.1.900-.4 1.200C9.100 8 8.600 8.600 7.800 8.600H4L2.300 8z" fill="#7fb19a"/></svg></span>
<span class="ic" style="left:600.60px;top:297.79px;width:13.8px;height:13.8px"><svg viewBox="0 0 16 16" width="13.8" height="13.8"><defs><linearGradient id="hg" x1="0" y1="0" x2="0" y2="1"><stop offset="0" stop-color="#ffffff"/><stop offset="1" stop-color="#cfe6f7"/></linearGradient></defs><rect x="2.700" y="1.100" width="1.900" height="4.500" fill="#f4bd2c"/><path d="M3.100 8.400V15.100h9.800V8.400L8 3.700z" fill="url(#hg)" stroke="#3a80c6" stroke-width="1.200"/><path d="M3.100 8.800L8 4l4.900 4.800V7L8 2.600 3.100 7z" fill="#fff"/><rect x="6.900" y="8.800" width="2.300" height="6.900" rx=".9" fill="#f3b928" stroke="#e29a10" stroke-width=".5"/><path d="M.5 8.400L8 .9l7.500 7.500-1.500 1.500L8 3.900 2 9.900z" fill="#fbd13e" stroke="#eeb11a" stroke-width=".7" stroke-linejoin="round"/></svg></span>
<span class="ic" style="left:677.90px;top:299.99px;width:10px;height:11px"><svg viewBox="0 0 10 11" width="10" height="11"><defs><linearGradient id="lg" x1="0" y1="0" x2="0" y2="1"><stop offset="0" stop-color="#fbbb0a"/><stop offset="1" stop-color="#e8920a"/></linearGradient></defs><path d="M2.500 4.600V3.300a2.500 2.500 0 0 1 5 0V4.600" fill="none" stroke="#cfd0d6" stroke-width="1.100"/><rect x=".6" y="4.100" width="8.800" height="6.400" rx=".7" fill="url(#lg)"/></svg></span>
<span class="t r" id="t82" style="left:75.80px;top:317.00px;font-size:12px;transform:translateX(-100%) scaleX(0.9432);">14</span>
<span class="t l" id="t83" style="left:83.60px;top:317.00px;font-size:12px;transform:scaleX(0.8124);">PRIMARYSTREET</span>
<span class="t l" id="t84" style="left:228.30px;top:317.00px;font-size:12px;transform:scaleX(0.9514);">Οδός</span>
<span class="t r" id="t85" style="left:441.80px;top:317.00px;font-size:12px;transform:translateX(-100%) scaleX(0.9435);">170</span>
<span class="t r" id="t86" style="left:493.10px;top:317.00px;font-size:12px;transform:translateX(-100%) scaleX(0.9627);">Ναι</span>
<span class="ic" style="left:496.90px;top:318.35px;width:9.3px;height:9.0px"><svg viewBox="0 0 10 10" width="9.3" height="9.0"><rect x="0" y="3.300" width="1.900" height="5.700" fill="#9a9cab"/><path d="M2.300 3.900C3.800 3.200 4.200 1.800 4.400.300c1.400 0 1.900 1.200 1.400 3h2.800c.9 0 1.200.8.900 1.400.3.500.2 1-.1 1.400.1.500-.1.900-.4 1.200C9.100 8 8.600 8.600 7.800 8.600H4L2.300 8z" fill="#7fb19a"/></svg></span>
<span class="ic" style="left:600.60px;top:315.30px;width:13.8px;height:13.8px"><svg viewBox="0 0 16 16" width="13.8" height="13.8"><defs><linearGradient id="hg" x1="0" y1="0" x2="0" y2="1"><stop offset="0" stop-color="#ffffff"/><stop offset="1" stop-color="#cfe6f7"/></linearGradient></defs><rect x="2.700" y="1.100" width="1.900" height="4.500" fill="#f4bd2c"/><path d="M3.100 8.400V15.100h9.800V8.400L8 3.700z" fill="url(#hg)" stroke="#3a80c6" stroke-width="1.200"/><path d="M3.100 8.800L8 4l4.900 4.800V7L8 2.600 3.100 7z" fill="#fff"/><rect x="6.900" y="8.800" width="2.300" height="6.900" rx=".9" fill="#f3b928" stroke="#e29a10" stroke-width=".5"/><path d="M.5 8.400L8 .9l7.500 7.500-1.500 1.500L8 3.900 2 9.900z" fill="#fbd13e" stroke="#eeb11a" stroke-width=".7" stroke-linejoin="round"/></svg></span>
<span class="ic" style="left:677.90px;top:317.50px;width:10px;height:11px"><svg viewBox="0 0 10 11" width="10" height="11"><defs><linearGradient id="lg" x1="0" y1="0" x2="0" y2="1"><stop offset="0" stop-color="#fbbb0a"/><stop offset="1" stop-color="#e8920a"/></linearGradient></defs><path d="M2.500 4.600V3.300a2.500 2.500 0 0 1 5 0V4.600" fill="none" stroke="#cfd0d6" stroke-width="1.100"/><rect x=".6" y="4.100" width="8.800" height="6.400" rx=".7" fill="url(#lg)"/></svg></span>
<span class="t r" id="t87" style="left:75.80px;top:335.00px;font-size:12px;transform:translateX(-100%) scaleX(0.9432);">15</span>
<span class="t l" id="t88" style="left:83.60px;top:335.00px;font-size:12px;transform:scaleX(0.8339);">PRIMARYSTREETNO</span>
<span class="t l" id="t89" style="left:228.30px;top:335.00px;font-size:12px;transform:scaleX(0.9897);">Αριθμός</span>
<span class="t r" id="t90" style="left:441.80px;top:335.00px;font-size:12px;transform:translateX(-100%) scaleX(0.9432);">80</span>
<span class="t r" id="t91" style="left:493.10px;top:335.00px;font-size:12px;transform:translateX(-100%) scaleX(0.9627);">Ναι</span>
<span class="ic" style="left:496.90px;top:335.87px;width:9.3px;height:9.0px"><svg viewBox="0 0 10 10" width="9.3" height="9.0"><rect x="0" y="3.300" width="1.900" height="5.700" fill="#9a9cab"/><path d="M2.300 3.900C3.800 3.200 4.200 1.800 4.400.300c1.400 0 1.900 1.200 1.400 3h2.800c.9 0 1.200.8.900 1.400.3.500.2 1-.1 1.400.1.500-.1.900-.4 1.200C9.100 8 8.600 8.600 7.800 8.600H4L2.300 8z" fill="#7fb19a"/></svg></span>
<span class="ic" style="left:600.60px;top:332.82px;width:13.8px;height:13.8px"><svg viewBox="0 0 16 16" width="13.8" height="13.8"><defs><linearGradient id="hg" x1="0" y1="0" x2="0" y2="1"><stop offset="0" stop-color="#ffffff"/><stop offset="1" stop-color="#cfe6f7"/></linearGradient></defs><rect x="2.700" y="1.100" width="1.900" height="4.500" fill="#f4bd2c"/><path d="M3.100 8.400V15.100h9.800V8.400L8 3.700z" fill="url(#hg)" stroke="#3a80c6" stroke-width="1.200"/><path d="M3.100 8.800L8 4l4.900 4.800V7L8 2.600 3.100 7z" fill="#fff"/><rect x="6.900" y="8.800" width="2.300" height="6.900" rx=".9" fill="#f3b928" stroke="#e29a10" stroke-width=".5"/><path d="M.5 8.400L8 .9l7.500 7.500-1.500 1.500L8 3.900 2 9.900z" fill="#fbd13e" stroke="#eeb11a" stroke-width=".7" stroke-linejoin="round"/></svg></span>
<span class="ic" style="left:677.90px;top:335.02px;width:10px;height:11px"><svg viewBox="0 0 10 11" width="10" height="11"><defs><linearGradient id="lg" x1="0" y1="0" x2="0" y2="1"><stop offset="0" stop-color="#fbbb0a"/><stop offset="1" stop-color="#e8920a"/></linearGradient></defs><path d="M2.500 4.600V3.300a2.500 2.500 0 0 1 5 0V4.600" fill="none" stroke="#cfd0d6" stroke-width="1.100"/><rect x=".6" y="4.100" width="8.800" height="6.400" rx=".7" fill="url(#lg)"/></svg></span>
<span class="t r" id="t92" style="left:75.80px;top:352.00px;font-size:12px;transform:translateX(-100%) scaleX(0.9432);">16</span>
<span class="t l" id="t93" style="left:83.60px;top:352.00px;font-size:12px;transform:scaleX(0.8611);">PRIMARYBRANCHPOSTA...</span>
<span class="t l" id="t94" style="left:228.30px;top:352.00px;font-size:12px;transform:scaleX(0.8218);">Τ.Κ.</span>
<span class="t r" id="t95" style="left:441.80px;top:352.00px;font-size:12px;transform:translateX(-100%) scaleX(0.9435);">100</span>
<span class="t r" id="t96" style="left:493.10px;top:352.00px;font-size:12px;transform:translateX(-100%) scaleX(0.9627);">Ναι</span>
<span class="ic" style="left:496.90px;top:353.38px;width:9.3px;height:9.0px"><svg viewBox="0 0 10 10" width="9.3" height="9.0"><rect x="0" y="3.300" width="1.900" height="5.700" fill="#9a9cab"/><path d="M2.300 3.900C3.800 3.200 4.200 1.800 4.400.300c1.400 0 1.900 1.200 1.400 3h2.800c.9 0 1.200.8.900 1.400.3.500.2 1-.1 1.400.1.500-.1.900-.4 1.200C9.100 8 8.600 8.600 7.800 8.600H4L2.300 8z" fill="#7fb19a"/></svg></span>
<span class="ic" style="left:600.60px;top:350.33px;width:13.8px;height:13.8px"><svg viewBox="0 0 16 16" width="13.8" height="13.8"><defs><linearGradient id="hg" x1="0" y1="0" x2="0" y2="1"><stop offset="0" stop-color="#ffffff"/><stop offset="1" stop-color="#cfe6f7"/></linearGradient></defs><rect x="2.700" y="1.100" width="1.900" height="4.500" fill="#f4bd2c"/><path d="M3.100 8.400V15.100h9.800V8.400L8 3.700z" fill="url(#hg)" stroke="#3a80c6" stroke-width="1.200"/><path d="M3.100 8.800L8 4l4.900 4.800V7L8 2.600 3.100 7z" fill="#fff"/><rect x="6.900" y="8.800" width="2.300" height="6.900" rx=".9" fill="#f3b928" stroke="#e29a10" stroke-width=".5"/><path d="M.5 8.400L8 .9l7.500 7.500-1.500 1.500L8 3.900 2 9.900z" fill="#fbd13e" stroke="#eeb11a" stroke-width=".7" stroke-linejoin="round"/></svg></span>
<span class="ic" style="left:677.90px;top:352.53px;width:10px;height:11px"><svg viewBox="0 0 10 11" width="10" height="11"><defs><linearGradient id="lg" x1="0" y1="0" x2="0" y2="1"><stop offset="0" stop-color="#fbbb0a"/><stop offset="1" stop-color="#e8920a"/></linearGradient></defs><path d="M2.500 4.600V3.300a2.500 2.500 0 0 1 5 0V4.600" fill="none" stroke="#cfd0d6" stroke-width="1.100"/><rect x=".6" y="4.100" width="8.800" height="6.400" rx=".7" fill="url(#lg)"/></svg></span>
<span class="t r" id="t97" style="left:75.80px;top:370.00px;font-size:12px;transform:translateX(-100%) scaleX(0.9432);">17</span>
<span class="t l" id="t98" style="left:83.60px;top:370.00px;font-size:12px;transform:scaleX(0.8693);">PRIMARYBRANCHEMAIL</span>
<span class="t l" id="t99" style="left:228.30px;top:370.00px;font-size:12px;transform:scaleX(0.9129);">Email</span>
<span class="t r" id="t100" style="left:441.80px;top:370.00px;font-size:12px;transform:translateX(-100%) scaleX(0.9435);">220</span>
<span class="t r" id="t101" style="left:493.10px;top:370.00px;font-size:12px;transform:translateX(-100%) scaleX(0.9627);">Ναι</span>
<span class="ic" style="left:496.90px;top:370.90px;width:9.3px;height:9.0px"><svg viewBox="0 0 10 10" width="9.3" height="9.0"><rect x="0" y="3.300" width="1.900" height="5.700" fill="#9a9cab"/><path d="M2.300 3.900C3.800 3.200 4.200 1.800 4.400.300c1.400 0 1.900 1.200 1.400 3h2.800c.9 0 1.200.8.900 1.400.3.500.2 1-.1 1.400.1.500-.1.900-.4 1.200C9.100 8 8.600 8.600 7.800 8.600H4L2.300 8z" fill="#7fb19a"/></svg></span>
<span class="ic" style="left:600.60px;top:367.85px;width:13.8px;height:13.8px"><svg viewBox="0 0 16 16" width="13.8" height="13.8"><defs><linearGradient id="hg" x1="0" y1="0" x2="0" y2="1"><stop offset="0" stop-color="#ffffff"/><stop offset="1" stop-color="#cfe6f7"/></linearGradient></defs><rect x="2.700" y="1.100" width="1.900" height="4.500" fill="#f4bd2c"/><path d="M3.100 8.400V15.100h9.800V8.400L8 3.700z" fill="url(#hg)" stroke="#3a80c6" stroke-width="1.200"/><path d="M3.100 8.800L8 4l4.900 4.800V7L8 2.600 3.100 7z" fill="#fff"/><rect x="6.900" y="8.800" width="2.300" height="6.900" rx=".9" fill="#f3b928" stroke="#e29a10" stroke-width=".5"/><path d="M.5 8.400L8 .9l7.500 7.500-1.500 1.500L8 3.900 2 9.900z" fill="#fbd13e" stroke="#eeb11a" stroke-width=".7" stroke-linejoin="round"/></svg></span>
<span class="ic" style="left:677.90px;top:370.05px;width:10px;height:11px"><svg viewBox="0 0 10 11" width="10" height="11"><defs><linearGradient id="lg" x1="0" y1="0" x2="0" y2="1"><stop offset="0" stop-color="#fbbb0a"/><stop offset="1" stop-color="#e8920a"/></linearGradient></defs><path d="M2.500 4.600V3.300a2.500 2.500 0 0 1 5 0V4.600" fill="none" stroke="#cfd0d6" stroke-width="1.100"/><rect x=".6" y="4.100" width="8.800" height="6.400" rx=".7" fill="url(#lg)"/></svg></span>
<span class="ic" style="left:11.8px;top:108.92px;width:4px;height:7px"><svg viewBox="0 0 4 7" width="4" height="7"><path d="M0 0l4 3.500L0 7z" fill="#3d3d52"/></svg></span>
<div class="" style="position:absolute;left:7.00px;top:583.00px;width:722.00px;height:32.00px;background:#fff;border-top:1px solid #d4d5db;border-bottom:1px solid #e4e5e9;box-sizing:border-box"></div>
<span class="ic" style="left:13.80px;top:591.40px;width:9px;height:9.2px"><svg viewBox="0 0 9 9" width="9" height="9.2"><rect x="0" y="0" width="2.200" height="9" fill="#f28c3a"/><path d="M9 0v9L2.600 4.500z" fill="#f28c3a"/></svg></span>
<span class="ic" style="left:36.60px;top:591.40px;width:6.5px;height:9.2px"><svg viewBox="0 0 6.500 9" width="6.5" height="9.2"><path d="M6.500 0v9L0 4.500z" fill="#f28c3a"/></svg></span>
<span class="t c" id="t102" style="left:73.60px;top:592.00px;font-size:9.4px;color:#2e2e40;transform:translateX(-50%) scaleX(0.9479);">2/17</span>
<span class="ic" style="left:106.10px;top:591.40px;width:6.5px;height:9.2px"><svg viewBox="0 0 6.500 9" width="6.5" height="9.2"><path d="M0 0v9L6.500 4.500z" fill="#f28c3a"/></svg></span>
<span class="ic" style="left:125.00px;top:591.40px;width:9px;height:9.2px"><svg viewBox="0 0 9 9" width="9" height="9.2"><rect x="6.800" y="0" width="2.200" height="9" fill="#f28c3a"/><path d="M0 0v9L6.400 4.500z" fill="#f28c3a"/></svg></span>
<span class="ic" style="left:151.50px;top:591.00px;width:11.4px;height:10.5px"><svg viewBox="0 0 11.400 10.500" width="11.4" height="10.5"><path d="M1 1.200l2.200-.9 7.400 6.600-.3 3-2.900-.4L.6 3.100z" fill="#e6e6ea" stroke="#b5b6be" stroke-width=".9"/><path d="M7.600 9.300l2.600-2.200" stroke="#b5b6be" stroke-width=".8"/></svg></span>
<span class="ic" style="left:176.80px;top:591.50px;width:9.8px;height:9.4px"><svg viewBox="0 0 9.800 9.400" width="9.8" height="9.4"><path d="M3.600 0h2.600v3.400h3.600v2.600H6.200v3.400H3.600V6H0V3.400h3.600z" fill="#f28c3a"/></svg></span>
<span class="ic" style="left:203.90px;top:594.80px;width:10.2px;height:2.8px"><svg viewBox="0 0 10.200 2.800" width="10.2" height="2.8"><rect width="10.200" height="2.800" rx=".7" fill="#e9644e"/></svg></span>
<span class="ic" style="left:233.70px;top:592.70px;width:9.7px;height:6.8px"><svg viewBox="0 0 9.700 6.800" width="9.7" height="6.8"><path d="M.9 6L4.850 1.700 8.800 6" fill="none" stroke="#f28c3a" stroke-width="2.600" stroke-linejoin="miter"/></svg></span>
<span class="t l" id="t103" style="left:248.80px;top:590.00px;font-size:12px;transform:scaleX(0.9424);">Πάνω</span>
<span class="ic" style="left:288.50px;top:592.70px;width:9.8px;height:6.8px"><svg viewBox="0 0 9.800 6.800" width="9.8" height="6.8"><path d="M.9 .8L4.900 5.100 8.900 .8" fill="none" stroke="#f28c3a" stroke-width="2.600"/></svg></span>
<span class="t l" id="t104" style="left:303.60px;top:590.00px;font-size:12px;transform:scaleX(0.9431);">Κάτω</span>
<span class="ic" style="left:342.00px;top:591.90px;width:8.4px;height:8.4px"><svg viewBox="0 0 8.400 8.400" width="8.4" height="8.4"><path d="M3 0h2.400v3h3v2.400h-3v3H3v-3H0V3h3z" fill="#f28c3a"/></svg></span>
<span class="t l" id="t105" style="left:355.00px;top:590.00px;font-size:12px;transform:scaleX(0.9860);">Υπολογιζόμενη Στήλη</span>
<div class="" style="position:absolute;left:3.00px;top:623.00px;width:732.00px;height:1.00px;background:#dfe0e5"></div>
<div class="" style="position:absolute;left:3.00px;top:624.00px;width:732.00px;height:0.00px;background:#f6f6f8"></div>
<div class="" style="position:absolute;left:567.00px;top:627.00px;width:89.00px;height:21.00px;border:1px solid #c3c4cb;box-sizing:border-box;border-radius:2px;background:#f0f1f3"></div>
<div class="" style="position:absolute;left:660.00px;top:627.00px;width:73.00px;height:21.00px;border:1px solid #c3c4cb;box-sizing:border-box;border-radius:2px;background:#f0f1f3"></div>
<span class="ic" style="left:570.90px;top:631.70px;width:10.9px;height:10.7px"><svg viewBox="0 0 10.900 10.700" width="10.9" height="10.7"><path d="M.6 1.400Q.6.600 1.400.600h7l1.900 1.700v7q0 .8-.8.800H1.400q-.8 0-.8-.8z" fill="#4e82b4"/><rect x="2.600" y=".6" width="5" height="3.300" fill="#dfe8f3"/><rect x="5.700" y="1" width="1.300" height="2.400" fill="#4e82b4"/></svg></span>
<span class="t l" id="t106" style="left:585.70px;top:632.00px;font-size:12px;transform:scaleX(0.9598);">Αποθήκευση</span>
<span class="ic" style="left:663.70px;top:631.90px;width:11.5px;height:10.9px"><svg viewBox="0 0 11.500 10.900" width="11.5" height="10.9"><path d="M3.900 3.550A3.400 3.400 0 1 1 4.500 8.100" fill="none" stroke="#e8623a" stroke-width="2.800"/><path d="M0 .6l.4 5.500 5.400-.9z" fill="#e8623a"/></svg></span>
<span class="t l" id="t107" style="left:678.60px;top:632.00px;font-size:12px;transform:scaleX(0.9519);">Ακύρωση</span>
<svg class="ic" style="left:0;top:0" width="738" height="655" viewBox="0 0 738 655"><path fill-rule="evenodd" fill="#ed1c24" d="M222.8 53h291.2v72H222.8zM227.3 57.4v62.9h281.6V57.4z"/></svg>
</body></html>
